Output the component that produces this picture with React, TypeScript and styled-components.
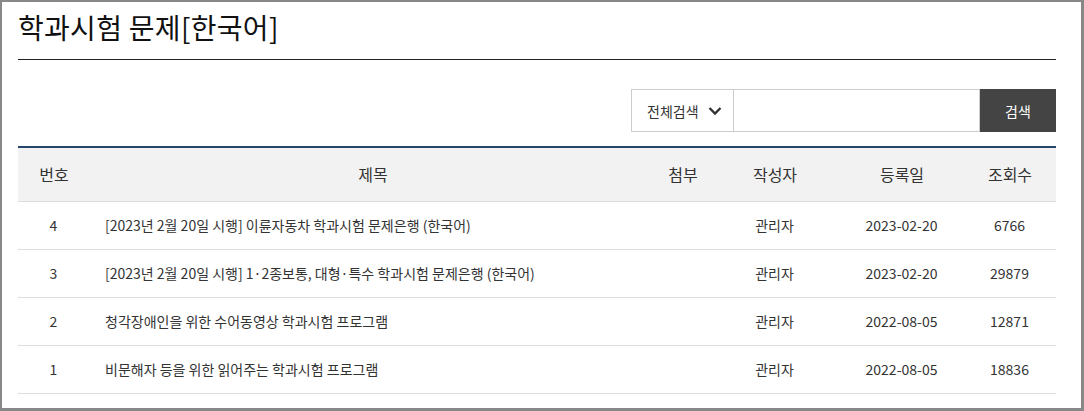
import React from "react";
import styled, { createGlobalStyle } from "styled-components";

const GlobalStyle = createGlobalStyle`
  html, body {
    margin: 0;
    padding: 0;
    background: #fff;
  }
  body {
    font-family: "Noto Sans CJK KR", "Noto Sans", sans-serif;
    color: #333;
  }
  * {
    box-sizing: border-box;
  }
`;

const Frame = styled.div`
  width: 1084px;
  height: 411px;
  border-style: solid;
  border-color: #888;
  border-width: 2px 3px 3px 2px;
  padding: 0 25px 0 16px;
  overflow: hidden;
`;

const Title = styled.h2`
  margin: 0;
  height: 58px;
  padding-top: 6px;
  font-size: 28px;
  font-weight: 400;
  color: #111;
  line-height: 38px;
  letter-spacing: 0.3px;
  border-bottom: 1px solid #222;
`;

const SearchBar = styled.form`
  display: flex;
  justify-content: flex-end;
  margin-top: 29px;
  height: 43px;
`;

const Select = styled.div`
  display: flex;
  align-items: center;
  gap: 9px;
  width: 103px;
  padding-left: 15px;
  border: 1px solid #ccc;
  font-size: 14px;
  color: #333;
`;

const Input = styled.input`
  width: 246px;
  border: 1px solid #ccc;
  border-left: none;
  outline: none;
  padding: 0 10px;
  font-size: 14px;
`;

const Button = styled.button`
  width: 76px;
  border: none;
  background: #444;
  color: #fff;
  font-family: inherit;
  font-size: 14px;
`;

const Table = styled.table`
  width: 100%;
  margin-top: 14px;
  border-collapse: collapse;
  border-top: 2px solid #26466b;
  table-layout: fixed;
  font-size: 14px;
`;

const Th = styled.th`
  height: 54px;
  background: #f2f2f2;
  border-bottom: 1px solid #ddd;
  font-size: 16px;
  font-weight: 400;
  color: #333;
  text-align: center;
`;

const Td = styled.td<{ $left?: boolean }>`
  height: 48px;
  border-bottom: 1px solid #ddd;
  text-align: ${(p) => (p.$left ? "left" : "center")};
  padding-left: ${(p) => (p.$left ? "15px" : "0")};
  color: #333;
  white-space: nowrap;
`;

const rows = [
  { no: 4, title: "[2023년 2월 20일 시행] 이륜자동차 학과시험 문제은행 (한국어)", date: "2023-02-20", views: 6766 },
  { no: 3, title: "[2023년 2월 20일 시행] 1·2종보통, 대형·특수 학과시험 문제은행 (한국어)", date: "2023-02-20", views: 29879 },
  { no: 2, title: "청각장애인을 위한 수어동영상 학과시험 프로그램", date: "2022-08-05", views: 12871 },
  { no: 1, title: "비문해자 등을 위한 읽어주는 학과시험 프로그램", date: "2022-08-05", views: 18836 },
];

export default function App() {
  return (
    <>
      <GlobalStyle />
      <Frame>
        <Title>학과시험 문제[한국어]</Title>
        <SearchBar onSubmit={(e) => e.preventDefault()}>
          <Select>
            전체검색
            <svg width="14" height="10" viewBox="0 0 14 10">
              <path d="M1.5 2 L7 7.5 L12.5 2" fill="none" stroke="#333" strokeWidth="2.4" />
            </svg>
          </Select>
          <Input />
          <Button type="submit">검색</Button>
        </SearchBar>
        <Table>
          <colgroup>
            <col style={{ width: 72 }} />
            <col style={{ width: 566 }} />
            <col style={{ width: 54 }} />
            <col style={{ width: 130 }} />
            <col style={{ width: 124 }} />
            <col style={{ width: 92 }} />
          </colgroup>
          <thead>
            <tr>
              <Th>번호</Th>
              <Th>제목</Th>
              <Th>첨부</Th>
              <Th>작성자</Th>
              <Th>등록일</Th>
              <Th>조회수</Th>
            </tr>
          </thead>
          <tbody>
            {rows.map((r) => (
              <tr key={r.no}>
                <Td>{r.no}</Td>
                <Td $left>{r.title}</Td>
                <Td />
                <Td>관리자</Td>
                <Td>{r.date}</Td>
                <Td>{r.views}</Td>
              </tr>
            ))}
          </tbody>
        </Table>
      </Frame>
    </>
  );
}
